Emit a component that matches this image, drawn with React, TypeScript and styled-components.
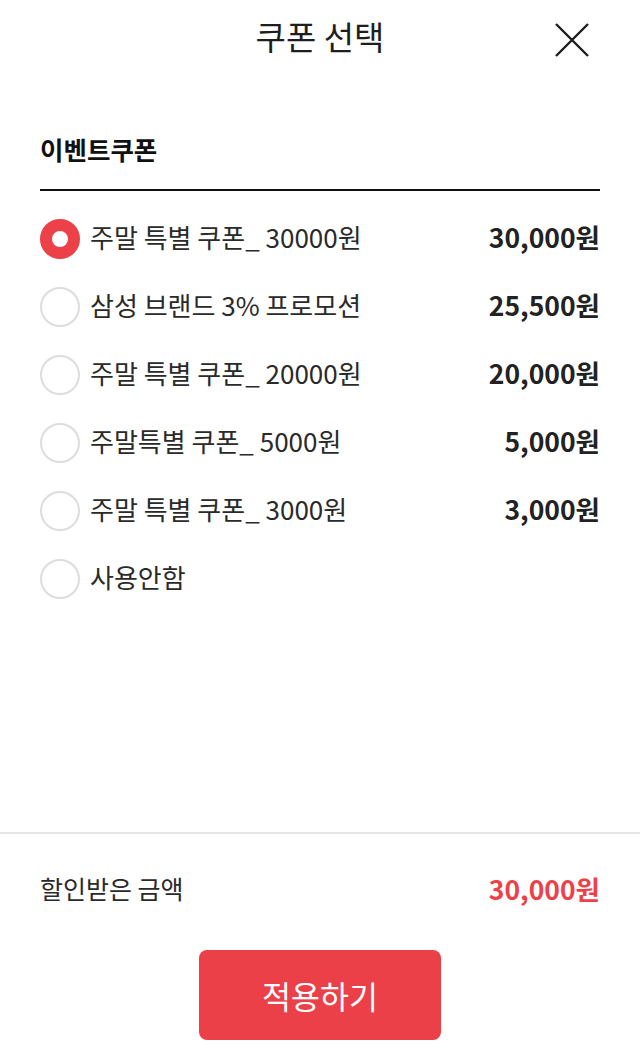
import { FC, useState } from "react";
import styled, { createGlobalStyle } from "styled-components";

interface ICoupon {
  id: number;
  name: string;
  price?: string;
}

const coupons: ICoupon[] = [
  { id: 1, name: "주말 특별 쿠폰_ 30000원", price: "30,000원" },
  { id: 2, name: "삼성 브랜드 3% 프로모션", price: "25,500원" },
  { id: 3, name: "주말 특별 쿠폰_ 20000원", price: "20,000원" },
  { id: 4, name: "주말특별 쿠폰_ 5000원", price: "5,000원" },
  { id: 5, name: "주말 특별 쿠폰_ 3000원", price: "3,000원" },
  { id: 6, name: "사용안함" },
];

const GlobalStyle = createGlobalStyle`
  * { box-sizing: border-box; }
  body {
    margin: 0;
    background: #fff;
    font-family: "Noto Sans CJK KR", "Noto Sans", sans-serif;
    color: #222;
  }
`;

const Page = styled.div`
  width: 640px;
  min-height: 1060px;
  display: flex;
  flex-direction: column;
`;

const Header = styled.header`
  position: relative;
  height: 76px;
  display: flex;
  align-items: center;
  justify-content: center;
`;

const Title = styled.h1`
  margin: 0 0 4px;
  font-size: 33px;
  font-weight: 400;
  color: #1e1e1e;
  line-height: 40px;
`;

const CloseButton = styled.button`
  position: absolute;
  right: 50px;
  top: 22px;
  width: 36px;
  height: 36px;
  padding: 0;
  border: none;
  background: none;
  display: flex;
  align-items: center;
  justify-content: center;
`;

const Content = styled.main`
  flex: 1;
  padding: 0 40px;
`;

const SectionTitle = styled.h2`
  margin: 54px 0 0;
  font-size: 25.5px;
  font-weight: 700;
  line-height: 38px;
  color: #111;
`;

const SectionLine = styled.div`
  margin-top: 21px;
  height: 2px;
  background: #111;
`;

const List = styled.ul`
  list-style: none;
  margin: 14px 0 0;
  padding: 0;
`;

const Row = styled.li`
  height: 68px;
  display: flex;
  align-items: center;
  cursor: pointer;
`;

const Radio = styled.span<{ checked: boolean }>`
  width: 40px;
  height: 40px;
  border-radius: 50%;
  flex-shrink: 0;
  background: #fff;
  border: ${(props) => (props.checked ? "12px solid #ec4149" : "2px solid #dddddd")};
`;

const Label = styled.span`
  margin-left: 10px;
  margin-bottom: 5px;
  flex: 1;
  font-size: 26px;
  color: #2a2a2a;
`;

const Price = styled.span`
  margin-bottom: 5px;
  font-size: 26.5px;
  font-weight: 700;
  color: #222;
`;

const Footer = styled.footer`
  border-top: 2px solid #e6e6e6;
  padding: 26px 40px 20px;
  display: flex;
  flex-direction: column;
  align-items: center;
`;

const Summary = styled.div`
  width: 100%;
  height: 56px;
  display: flex;
  align-items: center;
  justify-content: space-between;
`;

const SummaryLabel = styled.span`
  font-size: 25px;
  color: #2a2a2a;
`;

const SummaryPrice = styled.span`
  font-size: 26.5px;
  font-weight: 700;
  color: #ec4149;
`;

const ApplyButton = styled.button`
  margin-top: 34px;
  width: 242px;
  height: 90px;
  border: none;
  border-radius: 8px;
  background: #ec4049;
  color: #fff;
  font-family: inherit;
  font-size: 31.5px;
  font-weight: 400;
`;

const CloseIcon: FC = () => (
  <svg width="34" height="34" viewBox="0 0 34 34">
    <path d="M1 1 L33 33 M33 1 L1 33" stroke="#1e1e1e" strokeWidth="2.4" fill="none" />
  </svg>
);

export default function App() {
  const [selected, setSelected] = useState(1);
  const current = coupons.find((el) => el.id === selected);

  return (
    <Page>
      <GlobalStyle />
      <Header>
        <Title>쿠폰 선택</Title>
        <CloseButton aria-label="닫기">
          <CloseIcon />
        </CloseButton>
      </Header>
      <Content>
        <SectionTitle>이벤트쿠폰</SectionTitle>
        <SectionLine />
        <List>
          {coupons.map((el) => (
            <Row key={el.id} onClick={() => setSelected(el.id)}>
              <Radio checked={el.id === selected} />
              <Label>{el.name}</Label>
              {el.price && <Price>{el.price}</Price>}
            </Row>
          ))}
        </List>
      </Content>
      <Footer>
        <Summary>
          <SummaryLabel>할인받은 금액</SummaryLabel>
          <SummaryPrice>{current?.price ?? "0원"}</SummaryPrice>
        </Summary>
        <ApplyButton>적용하기</ApplyButton>
      </Footer>
    </Page>
  );
}
